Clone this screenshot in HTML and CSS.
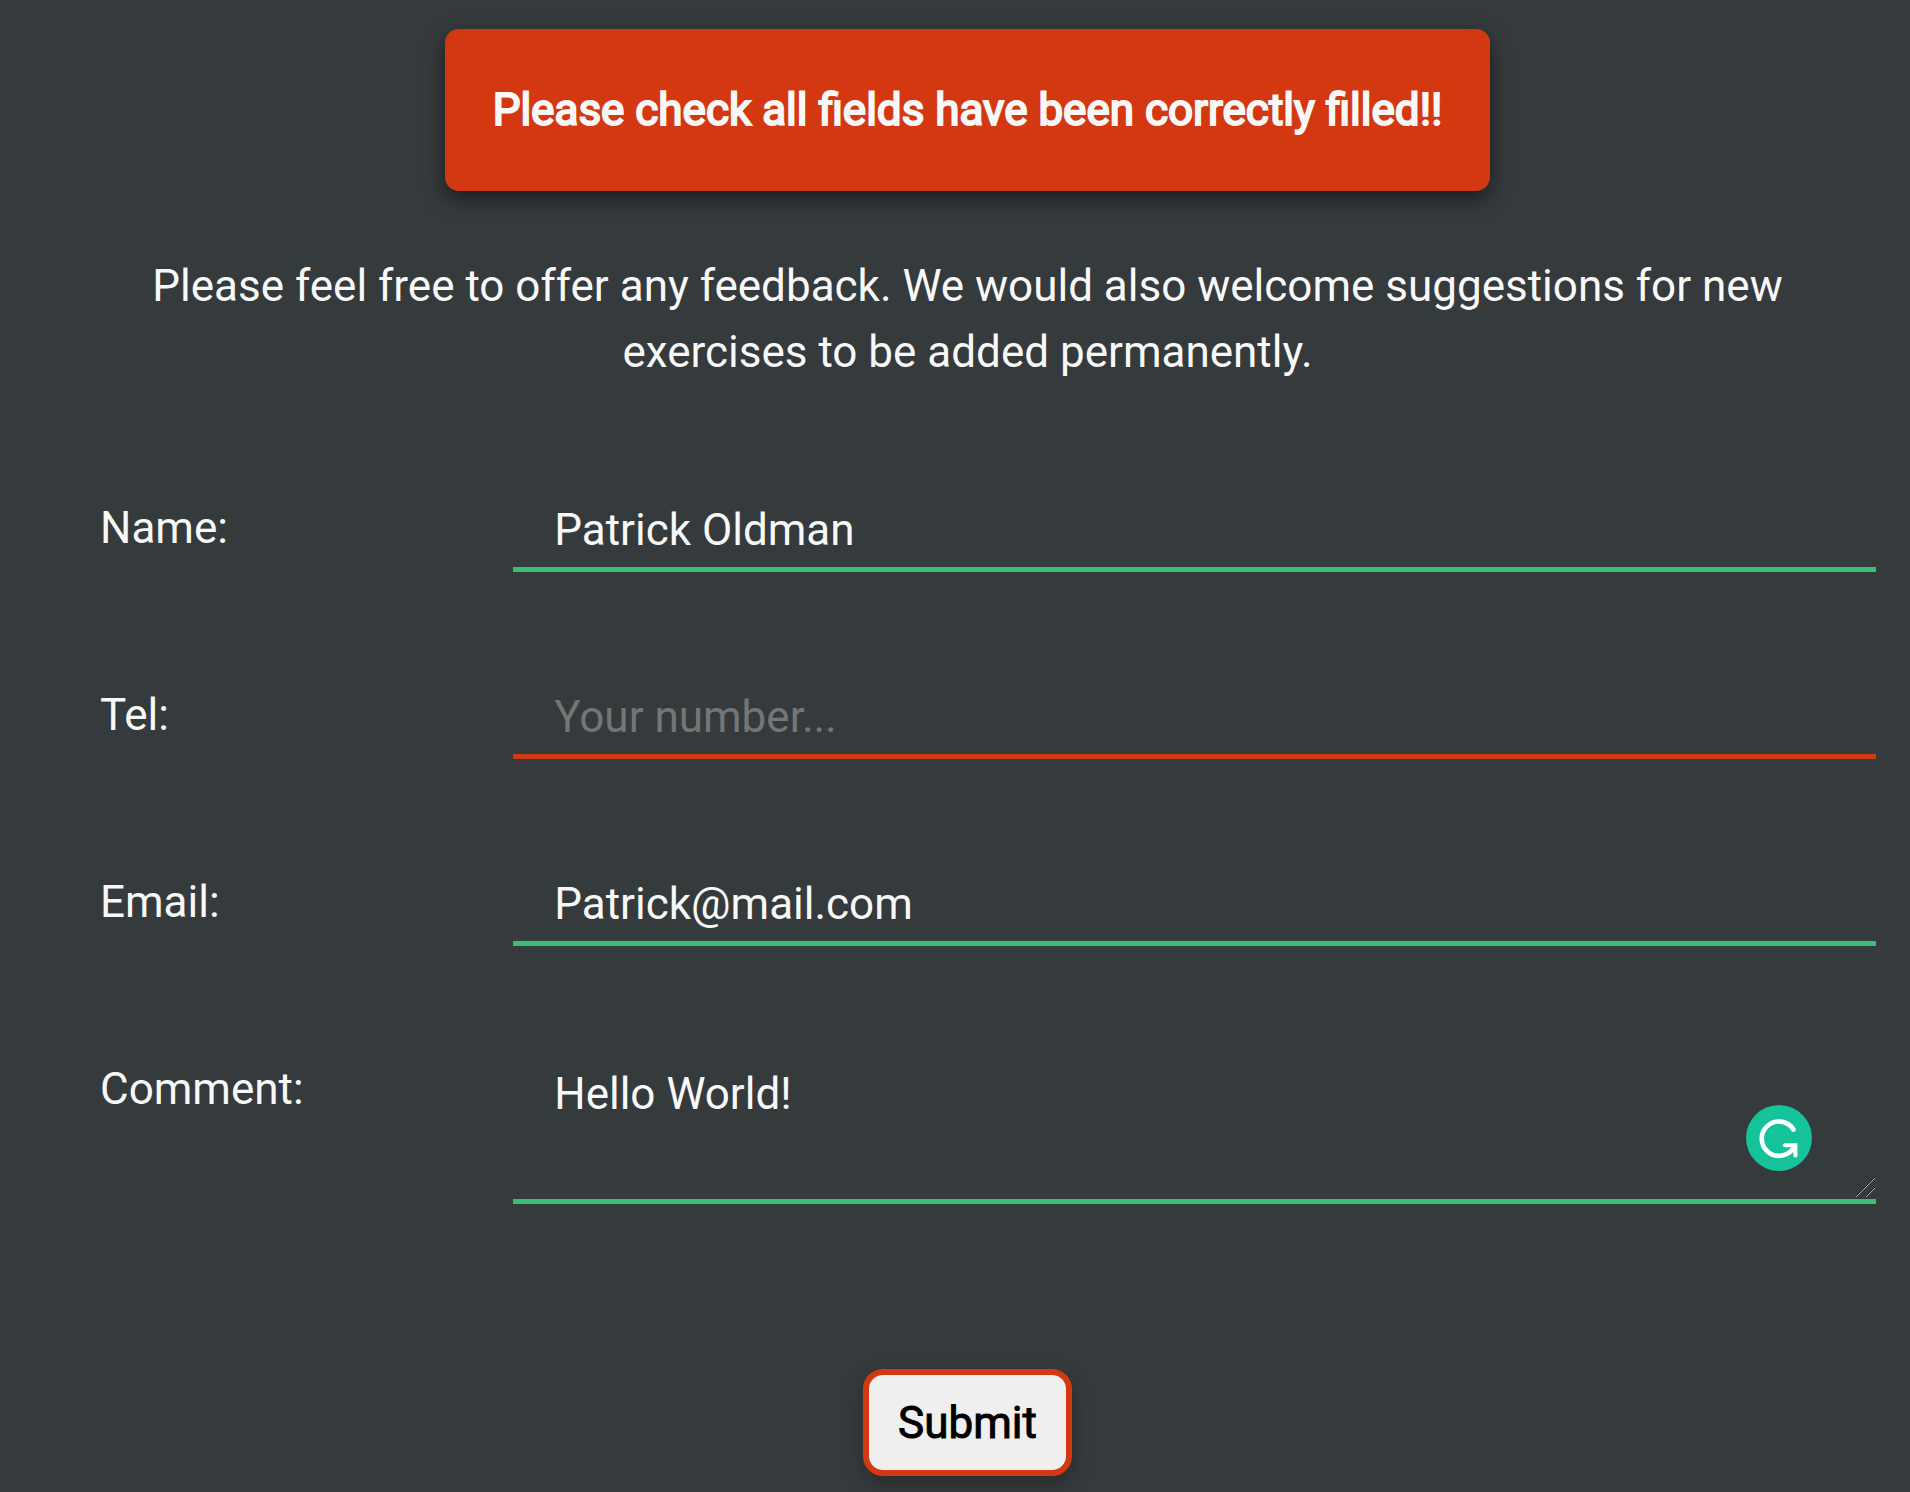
FILE: index.html
```html
<!DOCTYPE html>
<html lang="en">
<head>
<meta charset="utf-8">
<meta name="viewport" content="width=device-width, initial-scale=1">
<title>Feedback</title>
<link rel="stylesheet" href="styles.css">
</head>
<body>
<main class="page">
  <p class="alert" role="alert">Please check all fields have been correctly filled!!</p>
  <p class="intro">Please feel free to offer any feedback. We would also welcome suggestions for new exercises to be added permanently.</p>
  <form class="form" novalidate>
    <div class="row">
      <label class="label" for="name">Name:</label>
      <input class="control valid" id="name" type="text" value="Patrick Oldman">
    </div>
    <div class="row">
      <label class="label" for="tel">Tel:</label>
      <input class="control invalid" id="tel" type="tel" placeholder="Your number...">
    </div>
    <div class="row">
      <label class="label" for="email">Email:</label>
      <input class="control valid" id="email" type="email" value="Patrick@mail.com">
    </div>
    <div class="row">
      <label class="label" for="comment">Comment:</label>
      <div class="comment">
        <textarea class="control area valid" id="comment" spellcheck="false">Hello World!</textarea>
        <svg class="badge" viewBox="0 0 66 66" aria-hidden="true">
          <circle cx="33" cy="33" r="33" fill="#15c39a"/>
          <path d="M47.5 24.5A17.2 17.2 0 1 0 48.5 41" fill="none" stroke="#fff" stroke-width="4.6" stroke-linecap="round"/>
          <path d="M39 40.2H49.4V50.5" fill="none" stroke="#fff" stroke-width="4" stroke-linecap="round"/>
        </svg>
        <svg class="grip" viewBox="0 0 20 20" aria-hidden="true">
          <path d="M0 19L19 0M10 19L19 10" fill="none" stroke="#16191a" stroke-width="1"/>
          <path d="M0 20L19 1M10 20L19 11" fill="none" stroke="#b4b6b7" stroke-width="1"/>
        </svg>
      </div>
    </div>
    <button class="submit" type="submit">Submit</button>
  </form>
</main>
</body>
</html>
```
FILE: styles.css
```css
* {
  box-sizing: border-box;
}

body {
  margin: 0;
  background: #353a3c;
  color: #f8f8f8;
  font-family: Roboto, "Liberation Sans", sans-serif;
  font-size: 44px;
  line-height: 66px;
}

.page {
  display: flex;
  flex-direction: column;
  align-items: center;
  padding: 29px 34px 16px 59px;
}

.alert {
  margin: 0;
  padding: 48px;
  border-radius: 14px;
  background: #d43810;
  box-shadow: 0 8px 20px rgba(0, 0, 0, 0.5);
  -webkit-text-stroke: 2px currentColor;
}

.intro {
  margin: 62px 0 110px;
  padding: 0 41px;
  text-align: center;
}

.form {
  display: flex;
  flex-direction: column;
  gap: 110px;
  width: 100%;
}

.row {
  display: grid;
  grid-template-columns: 1fr 3fr;
  align-items: start;
}

.label {
  padding-left: 41px;
}

.control {
  display: block;
  width: 100%;
  height: 77px;
  margin: 0;
  padding: 2px 41px 4px;
  border: 0;
  border-bottom: 5px solid;
  border-radius: 0;
  outline: 0;
  background: transparent;
  color: #f8f8f8;
  font: inherit;
}

.control::placeholder {
  color: #757575;
  opacity: 1;
}

.valid {
  border-color: #38be75;
}

.invalid {
  border-color: #d03b14;
}

.comment {
  position: relative;
}

.area {
  height: 148px;
  padding-top: 5px;
  resize: none;
  overflow: hidden;
}

.badge {
  position: absolute;
  right: 64px;
  bottom: 33px;
  width: 66px;
  height: 66px;
}

.grip {
  position: absolute;
  right: 0;
  bottom: 7px;
  width: 20px;
  height: 20px;
}

.submit {
  align-self: center;
  margin-top: 55px;
  padding: 15px 29px 14px;
  border: 6px solid #d43810;
  border-radius: 20px;
  background: #efefef;
  box-shadow: 0 8px 20px rgba(0, 0, 0, 0.25);
  color: #000;
  font: inherit;
  -webkit-text-stroke: 1px currentColor;
}
```
